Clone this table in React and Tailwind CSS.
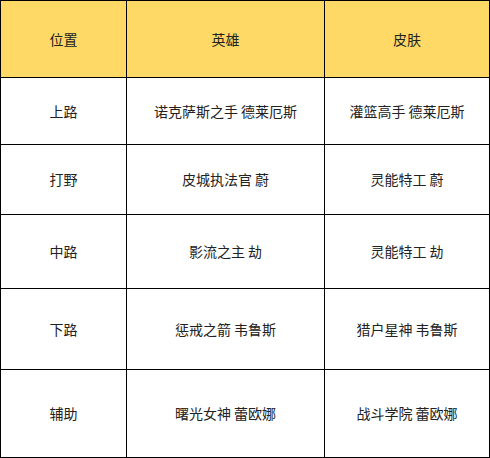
import React from 'react';

const rows = [
  { pos: '上路', hero: '诺克萨斯之手 德莱厄斯', skin: '灌篮高手 德莱厄斯', h: 'h-[67px]' },
  { pos: '打野', hero: '皮城执法官 蔚', skin: '灵能特工 蔚', h: 'h-[70px]' },
  { pos: '中路', hero: '影流之主 劫', skin: '灵能特工 劫', h: 'h-[74px]' },
  { pos: '下路', hero: '惩戒之箭 韦鲁斯', skin: '猎户星神 韦鲁斯', h: 'h-[81px]' },
  { pos: '辅助', hero: '曙光女神 蕾欧娜', skin: '战斗学院 蕾欧娜', h: 'h-[88px]' },
];

export default function App() {
  return (
    <div
      className="w-[490px] h-[458px] bg-white text-[14px] text-[#222]"
      style={{ fontFamily: '"Noto Sans CJK SC", "Noto Sans", sans-serif' }}
    >
      <div className="grid grid-cols-[126px_198px_165px] border-l border-t border-black">
        {/* Header */}
        {['位置', '英雄', '皮肤'].map((t) => (
          <div
            key={t}
            className="h-[77px] flex items-center justify-center bg-[#ffd966] border-r border-b border-black"
          >
            {t}
          </div>
        ))}

        {/* Body */}
        {rows.map((r) => (
          <React.Fragment key={r.pos}>
            <div className={`${r.h} flex items-center justify-center border-r border-b border-black`}>
              {r.pos}
            </div>
            <div className={`${r.h} flex items-center justify-center border-r border-b border-black`}>
              {r.hero}
            </div>
            <div className={`${r.h} flex items-center justify-center border-r border-b border-black`}>
              {r.skin}
            </div>
          </React.Fragment>
        ))}
      </div>
    </div>
  );
}
